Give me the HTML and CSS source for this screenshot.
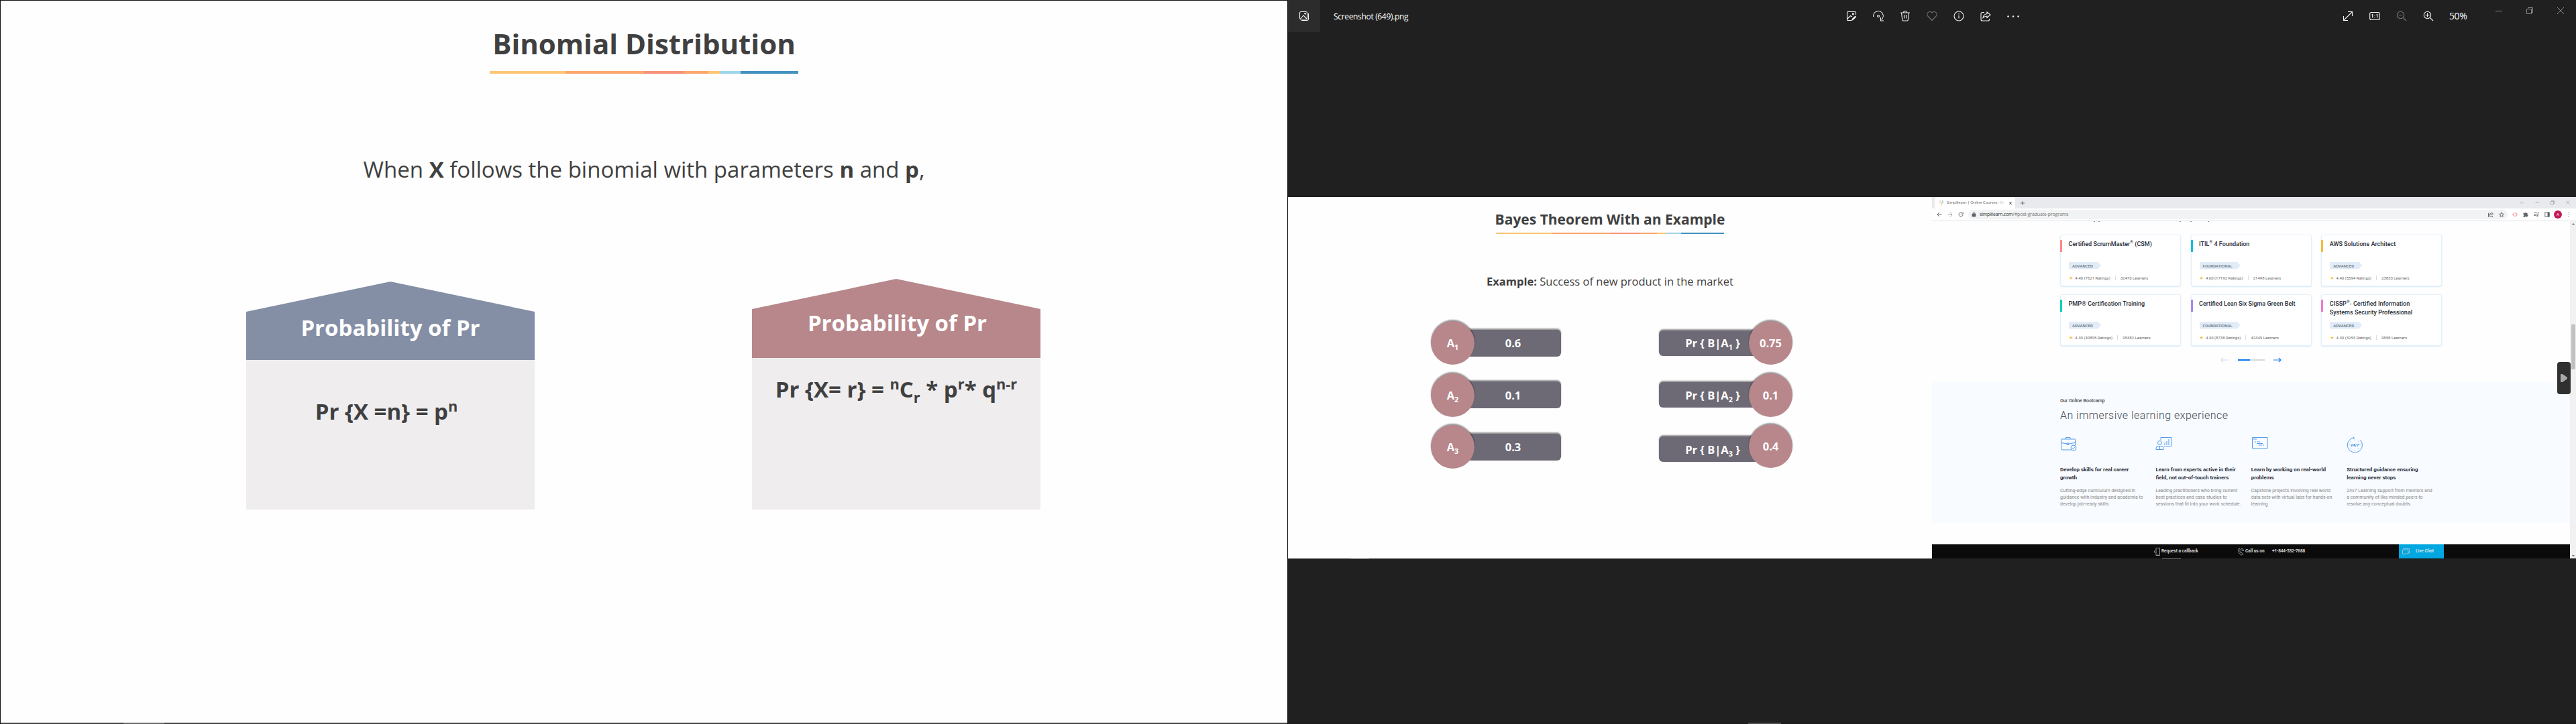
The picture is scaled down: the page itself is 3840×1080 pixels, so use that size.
FILE: index.html
```html
<!DOCTYPE html>
<html lang="en">
<head>
<meta charset="utf-8">
<title>Binomial Distribution</title>
<link rel="stylesheet" href="styles.css">
</head>
<body>
<main class="desktop">
  <section class="slide slide-main">
    <h1 class="slide-title">Binomial Distribution</h1>
    <div class="rule"><i class="c1"></i><i class="c2"></i><i class="c3"></i><i class="c4"></i><i class="c5"></i><i class="c6"></i><i class="c7"></i></div>
    <p class="lead">When <b>X</b> follows the binomial with parameters <b>n</b> and <b>p</b>,</p>
    <div class="houses">
      <article class="house blue">
        <h2>Probability of Pr</h2>
        <div class="house-body">Pr {X =n} = p<sup>n</sup></div>
      </article>
      <article class="house rose">
        <h2>Probability of Pr</h2>
        <div class="house-body">Pr {X= r} = <sup>n</sup>C<sub>r</sub> * p<sup>r</sup>* q<sup>n-r</sup></div>
      </article>
    </div>
    <div class="strip"><i></i></div>
  </section>

  <section class="viewer">
    <header class="viewer-bar">
      <div class="tile"><svg width="16" height="16" viewBox="0 0 16 16"><rect x="1.5" y="1.5" width="11" height="11" rx="2"/><path d="M2.5 12l4.5-5 5 5M14.5 4v8a2.5 2.5 0 0 1-2.5 2.500H4M9.500 3v3M8 4.500h3"/></svg></div>
      <span class="file-name">Screenshot (649).png</span>
      <nav class="tools">
        <svg viewBox="0 0 16 16"><path d="M8 14.500H2.500a1 1 0 0 1-1-1v-11a1 1 0 0 1 1-1h11a1 1 0 0 1 1 1V6M2 12l4.500-4.500L9 9"/><circle cx="10.500" cy="4.800" r="1.200"/><path class="solid" d="M8 15l.8-3 4.700-4.500 1.800 1.700-4.600 4.500z"/></svg>
        <svg viewBox="0 0 16 16"><path d="M.7 9A7.300 7.300 0 1 1 12.500 13.500M11.500 10v5M11 15h5"/><circle cx="8" cy="8" r="1.500"/></svg>
        <svg viewBox="0 0 16 16"><path d="M1 3h14M5.500 3a2.500 2.500 0 0 1 5 0M2.500 3l1.300 11a1.200 1.200 0 0 0 1 1h6.400a1.200 1.200 0 0 0 1-1L13.500 3M6.500 6v5.500M9.500 6v5.500"/></svg>
        <svg class="dim" viewBox="0 0 16 16"><path d="M8 14.500L1.700 8A4 4 0 0 1 8 3a4 4 0 0 1 6.300 5z"/></svg>
        <svg viewBox="0 0 16 16"><circle cx="8" cy="8" r="7"/><path d="M8 7v4.500M8 4v1.500"/></svg>
        <svg viewBox="0 0 16 16"><path d="M6 2.500H3a2 2 0 0 0-2 2V13a2 2 0 0 0 2 2h8.500a2 2 0 0 0 2-2v-1M10 2v2.500C6.500 5 4.500 7 4 10.500 6 8.500 7.500 8 10 8v2.500L15 6z"/></svg>
        <svg viewBox="0 0 20 16" class="dots"><circle cx="1.500" cy="8.500" r="1"/><circle cx="9" cy="8.500" r="1"/><circle cx="16.500" cy="8.500" r="1"/></svg>
      </nav>
      <div class="zoom-tools">
        <svg viewBox="0 0 16 16"><path d="M1.500 14.500l13-13M8 1.500h6.500V8M1.500 8v6.500H8"/></svg>
        <svg viewBox="0 0 16 16"><rect x=".7" y="2.500" width="14.600" height="11" rx="2"/><path d="M3.500 6.200l1.200-.7v5M10.500 6.200l1.200-.7v5M8 6.300v1M8 9v1"/></svg>
        <svg class="dim" viewBox="0 0 16 16"><circle cx="6.500" cy="6.500" r="5.200"/><path d="M10.500 10.500l4.500 4.500M4 6.500h5"/></svg>
        <svg viewBox="0 0 16 16"><circle cx="6.500" cy="6.500" r="5.200"/><path d="M10.500 10.500l4.500 4.500M3.500 6.500h6M6.500 3.500v6"/></svg>
        <span class="percent">50%</span>
      </div>
      <div class="caption-buttons">
        <svg viewBox="0 0 12 12"><path d="M1 6.500h10"/></svg>
        <svg viewBox="0 0 12 12"><path d="M1.500 3.500h7v7h-7zM3.500 3.500v-2h7v7h-2"/></svg>
        <svg viewBox="0 0 12 12"><path d="M1 1l10 10M11 1L1 11"/></svg>
      </div>
    </header>

    <div class="photo">
      <section class="slide slide-bayes">
        <h2 class="slide-title">Bayes Theorem With an Example</h2>
        <div class="rule"><i class="c1"></i><i class="c2"></i><i class="c3"></i><i class="c4"></i><i class="c5"></i><i class="c6"></i><i class="c7"></i></div>
        <p class="lead"><b>Example:</b> Success of new product in the market</p>
        <div class="events">
          <div class="col prior">
            <div class="event"><div class="disc"><span>A<sub>1</sub></span></div><div class="slab"><span>0.6</span></div></div>
            <div class="event"><div class="disc"><span>A<sub>2</sub></span></div><div class="slab"><span>0.1</span></div></div>
            <div class="event"><div class="disc"><span>A<sub>3</sub></span></div><div class="slab"><span>0.3</span></div></div>
          </div>
          <div class="col cond">
            <div class="event"><div class="slab"><span>Pr { B|A<sub>1</sub> }</span></div><div class="disc"><span>0.75</span></div></div>
            <div class="event"><div class="slab"><span>Pr { B|A<sub>2</sub> }</span></div><div class="disc"><span>0.1</span></div></div>
            <div class="event"><div class="slab"><span>Pr { B|A<sub>3</sub> }</span></div><div class="disc"><span>0.4</span></div></div>
          </div>
        </div>
      </section>

      <section class="browser">
        <div class="tabs">
          <div class="tab">
            <svg width="6" height="8" viewBox="0 0 6 8"><path d="M1 0v4.500M3 3v5" stroke="#f7b267" fill="none"/><path d="M5 0v4.500" stroke="#3fa9c9" fill="none"/></svg>
            <span class="tab-title">Simplilearn | Online Courses - Bo</span>
            <svg width="6" height="6" viewBox="0 0 6 6"><path d="M1 1l4 4M5 1L1 5" stroke="#45494d" fill="none"/></svg>
          </div>
          <svg class="plus" width="6" height="6" viewBox="0 0 6 6"><path d="M3 0v6M0 3h6" stroke="#5f6368" fill="none"/></svg>
          <div class="win">
            <svg viewBox="0 0 6 6"><path d="M.5 2L3 4.500 5.500 2"/></svg>
            <svg viewBox="0 0 6 6"><path d="M.5 3.500h5"/></svg>
            <svg viewBox="0 0 6 6"><path d="M.5 1.500h4v4h-4zM1.500 1.500v-1h4v4h-1"/></svg>
            <svg viewBox="0 0 6 6"><path d="M.5.5l5 5M5.500.5l-5 5"/></svg>
          </div>
        </div>
        <div class="address">
          <svg class="nav" viewBox="0 0 8 8"><path d="M7.500 4H1M4 1L1 4l3 3"/></svg>
          <svg class="nav faded" viewBox="0 0 8 8"><path d="M.5 4H7M4 1l3 3-3 3"/></svg>
          <svg class="nav" viewBox="0 0 8 8"><path d="M6.500 2A3.100 3.100 0 1 0 7.100 4.800M7.200.5v2.700H4.500"/></svg>
          <div class="url">
            <svg width="5" height="7" viewBox="0 0 5 7"><rect y="3" width="5" height="4" rx=".5" fill="#5f6368"/><path d="M1.200 3V2a1.300 1.300 0 0 1 2.600 0v1" stroke="#5f6368" stroke-width=".8" fill="none"/></svg>
            <span class="url-text"><em>simplilearn.com</em>/#post-graduate-programs</span>
            <svg class="u1" width="8" height="8" viewBox="0 0 8 8"><path d="M2 2H.5v5.500h6V6M5 1l2.500 2L5 5V4C3.500 4 2.700 4.500 2 5.500 2.300 3.500 3.300 2.200 5 2z"/></svg>
            <svg class="u2" width="8" height="8" viewBox="0 0 8 8"><path d="M4 .8l1 2.200 2.300.3-1.700 1.500.5 2.400L4 6 1.900 7.200l.5-2.400L.7 3.300 3 3z"/></svg>
          </div>
          <div class="ext">
            <svg viewBox="0 0 8 8" class="coral"><path d="M1.500 4l1-2M1.500 4l1 2M.2 4h1.300M3.500 1.700h2L7.200 4 5.500 6.300h-2"/></svg>
            <svg viewBox="0 0 8 8"><path fill="#5f6368" stroke="none" d="M.5 2H2.500a1.100 1.100 0 0 1 2.200 0H6.500V4a1.100 1.100 0 0 1 0 2.200V7.800H4.800a1 1 0 0 0-2 0H.5V6a1 1 0 0 0 0-2z"/></svg>
            <svg viewBox="0 0 8 8"><path d="M.3 1.500h4.500M.3 3.500h4.500M.3 5.500h2.500M6.200 6V1.200h1.600"/><circle cx="5.300" cy="6" r=".8"/></svg>
            <svg viewBox="0 0 8 8"><path d="M.8.8h6.400v6.400H.8z"/><path fill="#5f6368" d="M5 1h2v6H5z"/></svg>
            <span class="avatar">A</span>
            <svg viewBox="0 0 8 8"><path d="M4 .7v1.200M4 3.400v1.200M4 6.100v1.200"/></svg>
          </div>
        </div>
        <div class="page">
          <div class="content">
            <div class="cut"><i></i><i></i><i></i><i></i><i></i></div>
            <div class="courses">
              <article class="course coral-mark"><h3><span>Certified ScrumMaster<sup>®</sup> (CSM)</span></h3><div class="tag">ADVANCED</div><div class="meta"><b>★</b><span>4.40 (7621 Ratings)</span><i></i><span>32476 Learners</span></div></article>
              <article class="course cyan-mark"><h3><span>ITIL<sup>®</sup> 4 Foundation</span></h3><div class="tag">FOUNDATIONAL</div><div class="meta"><b>★</b><span>4.60 (17192 Ratings)</span><i></i><span>21498 Learners</span></div></article>
              <article class="course amber-mark"><h3><span>AWS Solutions Architect</span></h3><div class="tag">ADVANCED</div><div class="meta"><b>★</b><span>4.40 (5594 Ratings)</span><i></i><span>23833 Learners</span></div></article>
              <article class="course teal-mark"><h3><span>PMP® Certification Training</span></h3><div class="tag">ADVANCED</div><div class="meta"><b>★</b><span>4.30 (30895 Ratings)</span><i></i><span>95382 Learners</span></div></article>
              <article class="course violet-mark"><h3><span>Certified Lean Six Sigma Green Belt</span></h3><div class="tag">FOUNDATIONAL</div><div class="meta"><b>★</b><span>4.30 (8738 Ratings)</span><i></i><span>42345 Learners</span></div></article>
              <article class="course pink-mark"><h3><span>CISSP<sup>®</sup>- Certified Information<br>Systems Security Professional</span></h3><div class="tag">ADVANCED</div><div class="meta"><b>★</b><span>4.30 (3253 Ratings)</span><i></i><span>9858 Learners</span></div></article>
            </div>
            <div class="pager">
              <svg viewBox="0 0 12 8"><path stroke="#cfe0f2" d="M12 4H1M4 1L1 4l3 3"/></svg>
              <div class="track"><i></i></div>
              <svg viewBox="0 0 12 8"><path stroke="#1b7df0" d="M0 4h11M8 1l3 3-3 3"/></svg>
            </div>
            <div class="bootcamp">
              <h4>Our Online Bootcamp</h4>
              <h2>An immersive learning experience</h2>
              <div class="benefits">
                <article>
                  <svg viewBox="0 0 24 24"><path d="M17 20H2.500a1 1 0 0 1-1-1V5a1 1 0 0 1 1-1h19a1 1 0 0 1 1 1v8M8 4V2.500a1 1 0 0 1 1-1h5a1 1 0 0 1 1 1V4M1.500 9.500L10 11M22 9.500L13.500 11M10 10h3v2.500h-3z"/><circle cx="20" cy="17" r="4"/><path d="M18 17l1.500 1.500 2.500-3"/></svg>
                  <h5>Develop skills for real career<br>growth</h5>
                  <p>Cutting-edge curriculum designed in<br>guidance with industry and academia to<br>develop job-ready skills</p>
                </article>
                <article>
                  <svg viewBox="0 0 24 24"><path d="M8 5V1.500h16V14.500H13M14 13V9M17 13V7M20 13V4M1 19.500v-2a3 3 0 0 1 3-3h5a3 3 0 0 1 3 3v2zM6.500 15v4"/><circle cx="6.500" cy="9.500" r="3"/></svg>
                  <h5>Learn from experts active in their<br>field, not out-of-touch trainers</h5>
                  <p>Leading practitioners who bring current<br>best practices and case studies to<br>sessions that fit into your work schedule.</p>
                </article>
                <article>
                  <svg viewBox="0 0 24 24"><path d="M1.500 1.500h22.500v16.500H1.500zM5 8h2M8 8h5M8 10.500h9M11 13h5M17 13h2M3 4h5"/></svg>
                  <h5>Learn by working on real-world<br>problems</h5>
                  <p>Capstone projects involving real world<br>data sets with virtual labs for hands-on<br>learning</p>
                </article>
                <article>
                  <svg viewBox="0 0 24 24"><path d="M11 2a11 11 0 1 0 9 3M9.500.8L11.500 2 9.500 3.500"/><path d="M12 4.500v1M5 7l.7.5M3.500 12.500h1M19.500 12.500h1M12 20v1M6 18l.7-.7M18 18l-.7-.7M18.500 7l-.8.6"/><text x="12" y="14.500">24/7</text></svg>
                  <h5>Structured guidance ensuring<br>learning never stops</h5>
                  <p>24x7 Learning support from mentors and<br>a community of like-minded peers to<br>resolve any conceptual doubts</p>
                </article>
              </div>
            </div>
            <footer class="contact">
              <div class="callback"><svg width="10" height="12" viewBox="0 0 10 12"><path d="M4 .5h5.500v11H4zM6 10h1.500M2.500 4L1 6l1.500 2"/></svg><span>Request a callback</span></div>
              <div class="call"><svg width="10" height="12" viewBox="0 0 10 12"><path d="M2 2C0 4 3 10 6.500 11L9 9.500 7 7.500 5.500 8C4.500 7 4 6 3.700 4.500L4.700 3.500 3.500 1zM6 1a4 4 0 0 1 3.500 4M6 3a2 2 0 0 1 1.700 2"/></svg><span>Call us on</span></div>
              <span class="phone">+1-844-532-7688</span>
              <div class="chat"><svg width="11" height="10" viewBox="0 0 11 10"><path d="M.5 2h8.500v6H3.500L2.500 9.500 2 8H.5zM2 2V.5h8.500V7H9"/></svg><span>Live Chat</span></div>
            </footer>
          </div>
          <div class="scroll"><b class="up"></b><div class="thumb"></div><b class="down"></b></div>
        </div>
      </section>
      <div class="play"><svg width="10" height="12" viewBox="0 0 10 12"><path d="M1 0h2l7 5v2l-7 5H1a1 1 0 0 1-1-1V1a1 1 0 0 1 1-1z" fill="#a9a9a9"/></svg></div>
    </div>
    <div class="edge"><i></i><i></i></div>
    <div class="strip"><i></i></div>
  </section>
</main>
</body>
</html>
```
FILE: styles.css
```css
* { box-sizing: border-box; }
body { margin: 0; background: #202020; font-family: "Open Sans", "Noto Sans", sans-serif; }
h1, h2, h3, h4, h5, p { margin: 0; font-weight: inherit; font-size: inherit; }
svg { display: block; flex: none; overflow: visible; }
sup, sub { line-height: 0; font-size: .66em; }
.desktop { display: flex; width: 3840px; height: 1080px; overflow: hidden; white-space: nowrap; }

/* slides */
.slide { background: #fefefe; color: #404040; display: flex; flex-direction: column; align-items: center; flex: none; }
.slide-title { font-weight: 700; }
.rule { display: flex; }
.rule i { display: block; height: 100%; }
.c1 { flex: 113; background: #fdc673; }
.c2 { flex: 117; background: #fba76d; }
.c3 { flex: 59; background: #f99278; }
.c4 { flex: 36; background: #fba76d; }
.c5 { flex: 18; background: #fdc673; }
.c6 { flex: 31; background: #9fd5e9; }
.c7 { flex: 86; background: #4292c0; }

.slide-main { width: 1920px; border: 1px solid #111; border-bottom: 0; padding-top: 39px; }
.slide-main .slide-title { font-size: 42px; line-height: 50px; }
.slide-main .rule { width: 460px; height: 4px; margin-top: 16px; }
.slide-main .lead { font-size: 33px; line-height: 50px; margin-top: 118px; }
.houses { align-self: stretch; display: flex; align-items: stretch; gap: 324px; height: 344px; margin-top: 138px; padding-left: 366px; }
.house { width: 430px; display: flex; flex-direction: column; text-align: center; font-weight: 700; font-size: 33px; line-height: 40px; }
.house h2 { color: #fff; font-weight: 700; }
.house-body { flex: 1; background: #efedee; }
.blue { margin-top: 4px; }
.blue h2 { height: 117px; padding-top: 49px; background: #848fa6; clip-path: polygon(0 45px, 50% 0, 100% 45px, 100% 100%, 0 100%); }
.rose h2 { height: 118px; padding: 46px 0 0 3px; background: #b7878b; clip-path: polygon(0 45px, 50% 0, 100% 45px, 100% 100%, 0 100%); }
.blue .house-body { padding: 57px 12px 0 0; }
.rose .house-body { padding-top: 27px; }

/* taskbar sliver along the bottom edge of each screen */
.strip { height: 2px; margin-top: auto; align-self: stretch; background: #1c1c1c; padding-left: 686px; flex: none; }
.strip i { display: block; width: 49px; height: 2px; background: #4d4d4d; }
.slide-main .strip { background: #444; padding-left: 183px; }
.slide-main .strip i { width: 61px; background: #6a6a6a; }

/* photo viewer */
.viewer { width: 1920px; background: #202020; display: flex; flex-direction: column; }
.viewer-bar { height: 48px; display: flex; color: #fff; flex: none; }
.viewer-bar svg { fill: none; stroke: #f2f2f2; stroke-width: 1.1; }
.viewer-bar svg .solid { fill: #f2f2f2; stroke: none; }
.viewer-bar svg.dim { stroke: #777; }
.viewer-bar svg.dots { fill: #fff; stroke-width: .6; width: 20px; }
.tile { width: 48px; background: #2c2c2c; padding: 16px; }
.file-name { font-size: 12px; letter-spacing: -.33px; line-height: 49px; margin-left: 20px; width: 764px; }
.tools { display: flex; gap: 24px; padding-top: 16px; }
.tools svg { width: 16px; height: 16px; }
.zoom-tools { display: flex; gap: 24px; padding-top: 16px; margin-left: 480px; }
.zoom-tools svg { width: 16px; height: 16px; }
.percent { font-size: 14px; letter-spacing: -.4px; line-height: 15px; margin-left: -1px; width: 26px; }
.caption-buttons { display: flex; gap: 34px; margin-left: 42px; padding-top: 10px; }
.caption-buttons svg { width: 12px; height: 12px; stroke: #8a8a8a; stroke-width: 1; }

.photo { margin-top: 246px; height: 539px; display: flex; position: relative; flex: none; }
.edge { width: 960px; height: 1px; background: #4a4a4a; padding-left: 93px; }
.edge i { display: block; width: 28px; height: 1px; background: #707070; }
.edge { display: flex; gap: 1182px; }
.edge i { flex: none; }
.slide-bayes { width: 960px; padding-top: 18px; }
.slide-bayes .slide-title { font-size: 21px; line-height: 30px; }
.slide-bayes .rule { width: 340px; height: 2px; margin-top: 5px; }
.slide-bayes .lead { font-size: 16.5px; line-height: 24px; margin-top: 59px; }
.events { align-self: stretch; display: flex; margin: 47px 0 0 213px; gap: 146px; font-size: 16.5px; font-weight: 700; color: #fff; }
.col { display: flex; flex-direction: column; gap: 12.5px; }
.event { display: flex; align-items: center; height: 65px; }
.disc { width: 65px; height: 65px; border-radius: 50%; background: #b7878b; display: flex; align-items: center; justify-content: center; box-shadow: 0 -2px 2px rgba(0,0,0,.4); z-index: 1; flex: none; }
.slab { height: 40px; background: #6d6975; border-radius: 6px; display: flex; align-items: center; justify-content: center; box-shadow: 0 -2px 2px rgba(0,0,0,.4); }
.prior .slab { width: 161px; margin-left: -32px; padding-left: 18px; }
.cond .slab { width: 166px; height: 38px; margin-right: -32px; padding-right: 6px; }
.cond .event:last-child { margin-top: -1px; }
.cond .event:last-child .slab { margin-top: 9px; }

/* browser */
.browser { width: 960px; background: #fff; display: flex; flex-direction: column; font-family: Roboto, sans-serif; }
.browser svg { fill: none; stroke-width: .9; }
.tabs { height: 17px; background: #e8eaed; display: flex; align-items: center; flex: none; padding-left: 4px; }
.tab { width: 120px; height: 17px; background: #fff; border-radius: 4px 4px 0 0; display: flex; align-items: center; padding: 0 5px 0 7px; gap: 5px; }
.tab-title { width: 87px; font: 6px/17px "Open Sans", sans-serif; letter-spacing: -.18px; color: #666; -webkit-mask-image: linear-gradient(90deg, #000 85%, transparent); mask-image: linear-gradient(90deg, #000 85%, transparent); }
.plus { margin-left: 8px; }
.win { margin-left: auto; display: flex; gap: 17px; padding: 0 9px 2px 0; }
.win svg { width: 6px; height: 6px; stroke: #999; stroke-width: .7; }
.address { height: 19px; display: flex; align-items: center; border-bottom: 1px solid #dfe3e8; padding: 0 7px 1px; flex: none; }
.address svg { stroke: #5f6368; }
.address svg.coral { stroke: #f4696b; }
.nav { width: 8px; height: 8px; margin-right: 8px; }
.faded { opacity: .6; }
.url { width: 804px; height: 14px; border-radius: 7px; background: #f1f3f4; margin-left: -1px; display: flex; align-items: center; padding: 0 5px 0 6px; gap: 6px; }
.url-text { font: 7px/14px "Open Sans", sans-serif; letter-spacing: -.18px; color: #777; }
.url-text em { font-style: normal; color: #333; }
.u1 { margin-left: auto; }
.u2 { margin-left: 2px; }
.ext { display: flex; align-items: center; gap: 8px; margin-left: 7px; }
.ext svg { width: 8px; height: 8px; }
.avatar { width: 12px; height: 12px; margin: 0 -2px; border-radius: 50%; background: #c2185b; color: #fff; font-size: 6px; line-height: 12px; text-align: center; }
.page { flex: 1; display: flex; }
.content { width: 951px; display: flex; flex-direction: column; background: #fefefe; }
.cut { height: 2px; display: flex; padding-left: 241px; }
.cut i { width: 2px; height: 1px; background: #8a93a3; margin-right: 5px; }
.cut i:nth-child(2) { margin-right: 119px; }
.cut i:nth-child(3) { margin-right: 14px; }
.cut i:nth-child(4) { margin-right: 24px; }
.courses { display: grid; grid-template-columns: repeat(3, 180px); grid-auto-rows: 77px; gap: 12px 14.6px; padding: 17.5px 0 0 191px; }
.course { background: #fff; border: 1px solid #e4f0fa; border-radius: 3px; box-shadow: 0 1px 2px #d5e8f7; padding-top: 7px; display: flex; flex-direction: column; }
.coral-mark { --accent: #ff8a8a; }
.cyan-mark { --accent: #00c2e0; }
.amber-mark { --accent: #f5bc42; }
.teal-mark { --accent: #00d3b4; }
.violet-mark { --accent: #a985f0; }
.pink-mark { --accent: #f178c8; }
.course h3 { font-size: 9.05px; line-height: 13px; font-weight: 500; color: #272c37; height: 33px; padding-left: 12.5px; margin-left: -1px; background: linear-gradient(var(--accent), var(--accent)) 0 0 / 3px 18px no-repeat; }
.course h3 sup { font-size: 6px; vertical-align: 4px; }
.tag { align-self: flex-start; margin-left: 12px; height: 11px; padding: 0 12px 0 5px; background: #e1ecf8; font-size: 6px; line-height: 11px; color: #68737d; font-weight: 500; clip-path: polygon(0 0, calc(100% - 5px) 0, 100% 50%, calc(100% - 5px) 100%, 0 100%); }
.meta { display: flex; align-items: center; margin: 8px 0 0 12px; font-size: 6px; line-height: 10px; color: #666; }
.meta b { color: #f7b93e; font: 7px/10px "DejaVu Sans", sans-serif; margin-right: 3px; }
.meta i { width: 1px; height: 7px; background: #ddd; margin: 0 7px; }
.pager { display: flex; align-items: center; margin: 17px 0 0 430px; height: 8px; }
.pager svg { width: 12px; height: 8px; stroke-width: 1.2; }
.track { width: 40px; height: 2px; background: #d8d8d8; margin: 0 13px 0 14px; }
.track i { display: block; width: 18px; height: 2px; background: #0a78f0; }
.bootcamp { margin-top: 29px; height: 210px; background: #f8fbff; padding: 23px 0 0 191px; }
.bootcamp h4 { font-size: 7px; line-height: 10px; font-weight: 500; color: #444; }
.bootcamp h2 { font-size: 16px; line-height: 20px; font-weight: 300; color: #444a55; margin-top: 7px; letter-spacing: .47px; }
.benefits { display: grid; grid-template-columns: repeat(4, 142.4px); margin-top: 21px; }
.benefits svg { width: 24px; height: 24px; stroke: #3d8fe8; margin-bottom: 20px; }
.benefits svg text { font: 700 6px Roboto, sans-serif; fill: #2f86e4; stroke: none; text-anchor: middle; }
.benefits h5 { font-size: 8px; line-height: 12px; font-weight: 700; color: #272c37; }
.benefits p { font-size: 7px; line-height: 10px; color: #888; margin-top: 8px; }
.contact { margin-top: auto; height: 21px; background: #0b0b0b; color: #eee; font-size: 6.5px; line-height: 21px; font-weight: 500; display: flex; }
.contact div { display: flex; align-items: center; gap: 2px; }
.contact svg { stroke: #ccc; stroke-width: .7; }
.callback { margin-left: 330px; width: 125px; }
.call { width: 52px; }
.phone { width: 189px; letter-spacing: -.12px; }
.contact .chat { width: 67px; background: #00a7e1; padding-left: 5px; gap: 9px; }
.scroll { width: 9px; background: #f1f1f1; display: flex; flex-direction: column; align-items: center; padding: 3px 0; }
.up { border: 2px solid transparent; border-top: 0; border-bottom: 2px solid #555; }
.down { border: 2px solid transparent; border-bottom: 0; border-top: 2px solid #555; margin-top: auto; }
.thumb { width: 6px; height: 67px; background: #c1c1c1; margin-top: 149px; }
.play { position: absolute; right: 8px; top: 246px; width: 20px; height: 48px; border-radius: 4px; background: #303030; display: flex; align-items: center; justify-content: center; }
```
